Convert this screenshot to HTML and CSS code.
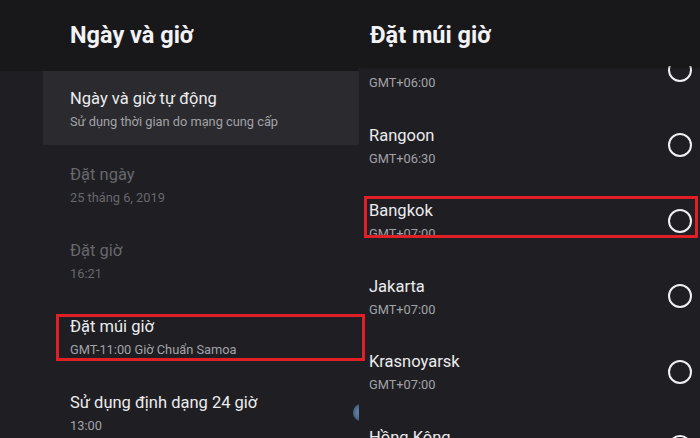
FILE: index.html
```html
<!DOCTYPE html>
<html lang="vi">
<head>
<meta charset="utf-8">
<link rel="stylesheet" href="styles.css">
</head>
<body>
<div class="app">
  <section class="panel left">
    <header class="head"><h1>Ngày và giờ</h1></header>
    <ul class="list">
      <li class="row active">
        <div class="title">Ngày và giờ tự động</div>
        <div class="sub">Sử dụng thời gian do mạng cung cấp</div>
      </li>
      <li class="row disabled">
        <div class="title">Đặt ngày</div>
        <div class="sub">25 tháng 6, 2019</div>
      </li>
      <li class="row disabled">
        <div class="title">Đặt giờ</div>
        <div class="sub">16:21</div>
      </li>
      <li class="row">
        <div class="title">Đặt múi giờ</div>
        <div class="sub">GMT-11:00 Giờ Chuẩn Samoa</div>
        <span class="mark mark-left"></span>
      </li>
      <li class="row">
        <div class="title">Sử dụng định dạng 24 giờ</div>
        <div class="sub">13:00</div>
        <span class="toggle"></span>
      </li>
    </ul>
  </section>
  <section class="panel right">
    <header class="head"><h1>Đặt múi giờ</h1></header>
    <div class="scroll">
      <ul class="list zones">
        <li class="zone"><div class="txt"><div class="title-space"></div><div class="sub">GMT+06:00</div></div><span class="radio"></span></li>
        <li class="zone"><div class="txt"><div class="title">Rangoon</div><div class="sub">GMT+06:30</div></div><span class="radio"></span></li>
        <li class="zone picked"><div class="txt"><div class="title">Bangkok</div><div class="sub">GMT+07:00</div></div><span class="radio"></span><span class="mark mark-right"></span></li>
        <li class="zone"><div class="txt"><div class="title">Jakarta</div><div class="sub">GMT+07:00</div></div><span class="radio"></span></li>
        <li class="zone"><div class="txt"><div class="title">Krasnoyarsk</div><div class="sub">GMT+07:00</div></div><span class="radio"></span></li>
        <li class="zone"><div class="txt"><div class="title">Hồng Kông</div><div class="sub">GMT+08:00</div></div><span class="radio"></span></li>
      </ul>
    </div>
  </section>
</div>
</body>
</html>
```
FILE: styles.css
```css
* { box-sizing: border-box; }
html, body { margin: 0; padding: 0; }
body {
  width: 700px;
  height: 438px;
  overflow: hidden;
  background: #202024;
  font-family: Roboto, "Noto Sans", "Liberation Sans", sans-serif;
  color: #ececee;
}
.app {
  display: flex;
  height: 438px;
}
.panel {
  display: flex;
  flex-direction: column;
  overflow: hidden;
  background: #1f1f23;
}
.left {
  width: 359px;
  flex: none;
  overflow: visible;
  position: relative;
  z-index: 3;
}
.right { flex: 1; position: relative; }
.head {
  background: #18181b;
  flex: none;
  position: relative;
  z-index: 2;
}
.left .head { height: 71px; padding: 20px 0 0 70px; }
.right .head {
  height: 66px;
  padding: 20px 0 0 11px;
  box-shadow: 0 1px 3px rgba(0,0,0,0.45);
}
.head h1 {
  margin: 0;
  font-size: 23.5px;
  line-height: 30px;
  font-weight: 700;
  color: #f2f2f4;
}
.list {
  list-style: none;
  margin: 0;
  padding: 0;
}
.left .list { padding-left: 43px; }
.row {
  position: relative;
  height: 76px;
  padding: 18px 0 0 27px;
}
.row.active { background: #2b2b2f; height: 74px; margin-bottom: 2px; }
.title {
  font-size: 16.5px;
  line-height: 20px;
  color: #ececee;
}
.title-space { height: 20px; }
.sub {
  margin-top: 4px;
  font-size: 12.8px;
  line-height: 18px;
  color: #a2a2a6;
}
.row.disabled .title,
.row.disabled .sub { color: #67676c; }

.mark {
  position: absolute;
  border: 3px solid #e11f27;
  pointer-events: none;
}
.mark-left {
  left: 13px;
  right: -6px;
  top: 15px;
  height: 47px;
}
.toggle {
  position: absolute;
  left: 310px;
  top: 29px;
  width: 16px;
  height: 17px;
  border-radius: 50%;
  background: radial-gradient(circle at 40% 50%, #6a8aab 0, #45617f 55%, #2c3a4a 100%);
  clip-path: polygon(0 0, 6px 0, 6px 100%, 0 100%);
}

.scroll {
  flex: 1;
  overflow: hidden;
}
.zones { margin-top: -34px; }
.zone {
  position: relative;
  height: 75.5px;
  display: flex;
  align-items: center;
  padding: 0 8px 0 10px;
}
.zone .txt {
  flex: 1;
  align-self: flex-start;
  padding-top: 18px;
}
.radio {
  width: 24px;
  height: 24px;
  border: 2px solid #f0f0f2;
  border-radius: 50%;
  flex: none;
}
.mark-right {
  left: 5px;
  right: 2px;
  top: 13px;
  height: 42px;
}
.zone.picked .txt { height: 53px; overflow: hidden; }
```
